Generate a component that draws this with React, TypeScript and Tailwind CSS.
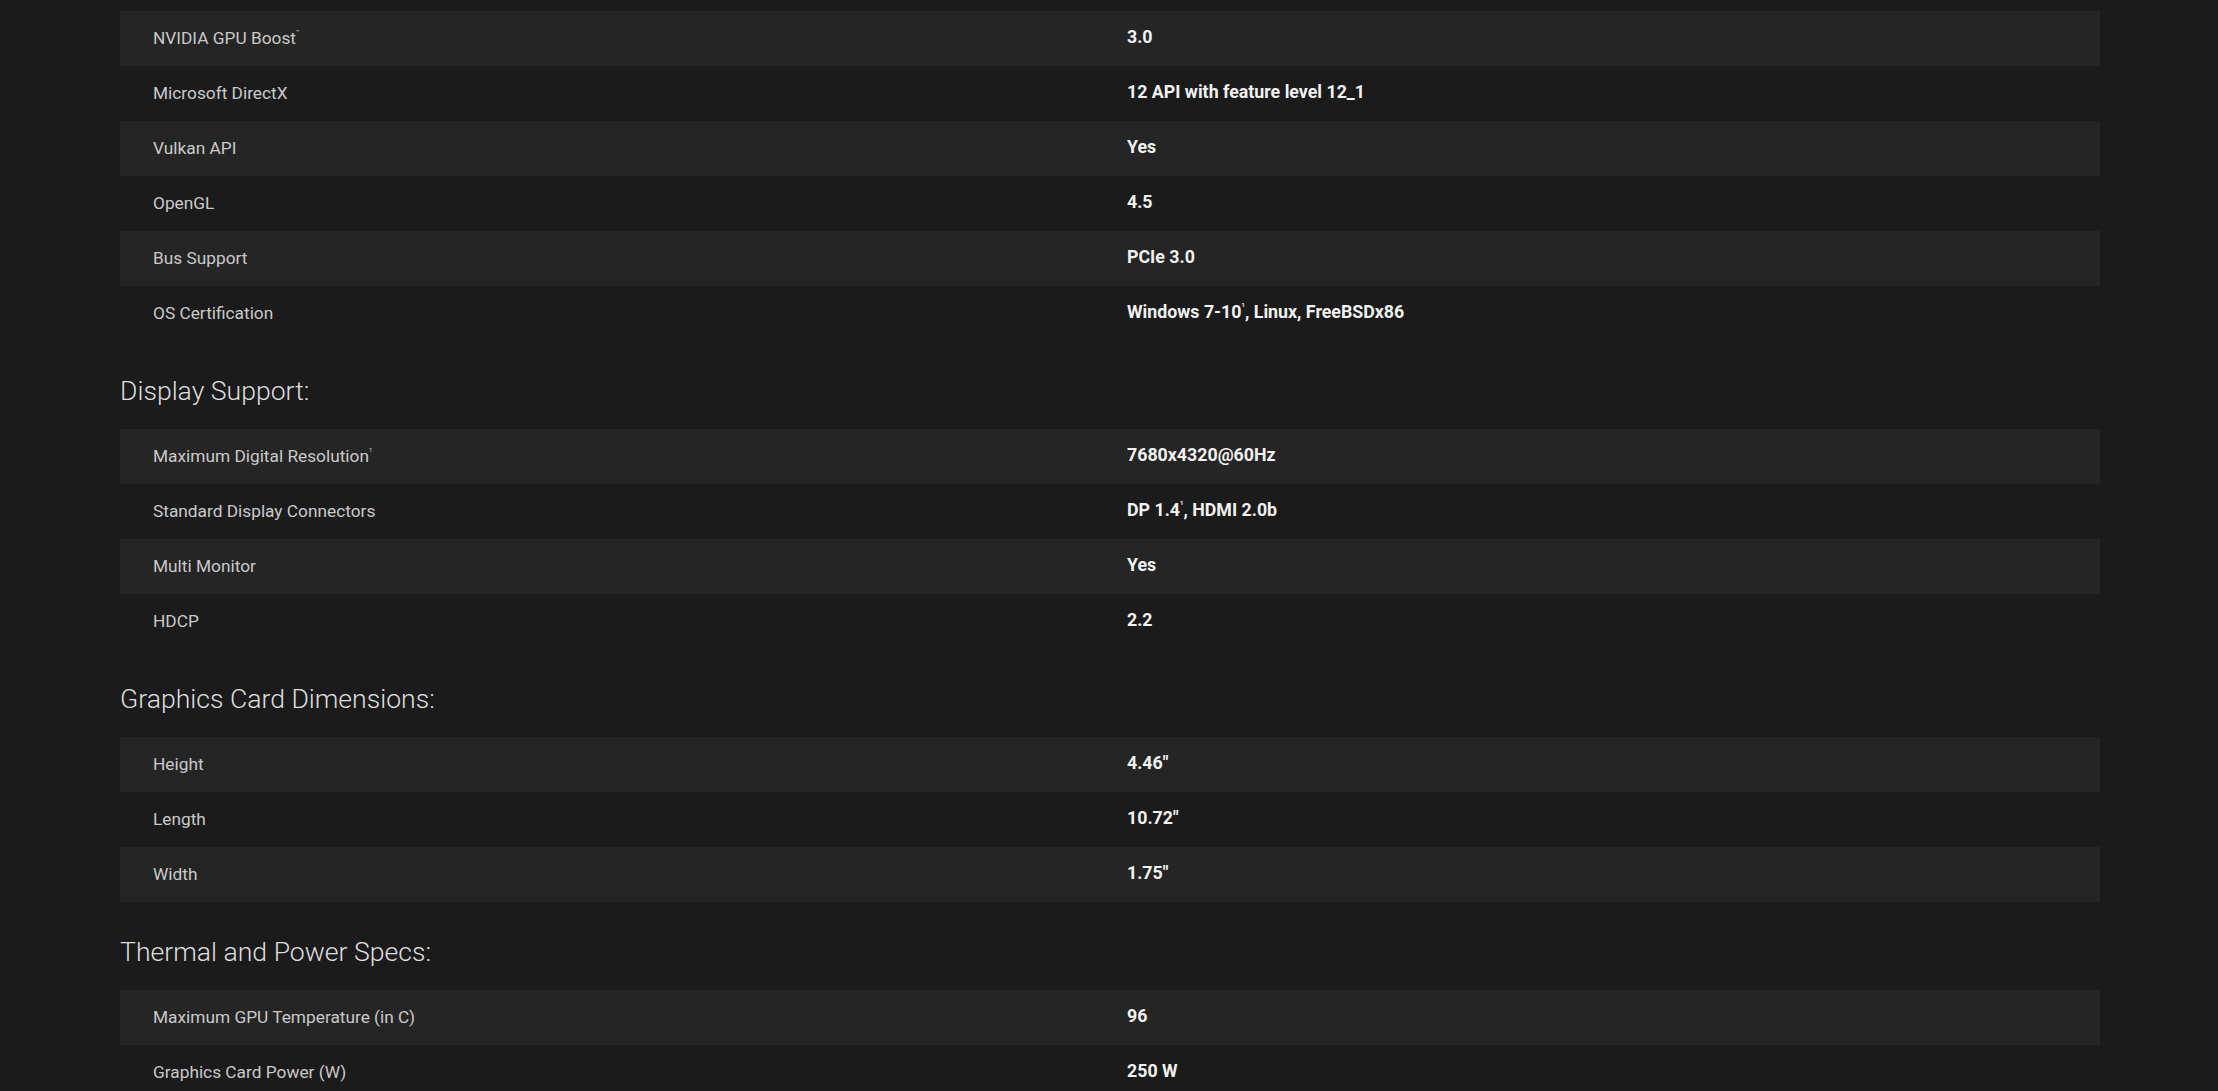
import React from "react";

type Row = { label: React.ReactNode; value: React.ReactNode };

const Sup = ({ children }: { children: React.ReactNode }) => (
  <sup className="text-[6px] align-top relative top-[3px] leading-none">{children}</sup>
);

const sections: { title?: string; rows: Row[] }[] = [
  {
    rows: [
      { label: <>NVIDIA GPU Boost<Sup>™</Sup></>, value: "3.0" },
      { label: "Microsoft DirectX", value: "12 API with feature level 12_1" },
      { label: "Vulkan API", value: "Yes" },
      { label: "OpenGL", value: "4.5" },
      { label: "Bus Support", value: "PCIe 3.0" },
      { label: "OS Certification", value: <>Windows 7-10<Sup>1</Sup>, Linux, FreeBSDx86</> },
    ],
  },
  {
    title: "Display Support:",
    rows: [
      { label: <>Maximum Digital Resolution<Sup>1</Sup></>, value: "7680x4320@60Hz" },
      { label: "Standard Display Connectors", value: <>DP 1.4<Sup>1</Sup>, HDMI 2.0b</> },
      { label: "Multi Monitor", value: "Yes" },
      { label: "HDCP", value: "2.2" },
    ],
  },
  {
    title: "Graphics Card Dimensions:",
    rows: [
      { label: "Height", value: "4.46\"" },
      { label: "Length", value: "10.72\"" },
      { label: "Width", value: "1.75\"" },
    ],
  },
  {
    title: "Thermal and Power Specs:",
    rows: [
      { label: "Maximum GPU Temperature (in C)", value: "96" },
      { label: "Graphics Card Power (W)", value: "250 W" },
    ],
  },
];

export default function App() {
  return (
    <div className="min-h-screen bg-[#1b1b1b] font-['Roboto','Liberation_Sans',sans-serif] pt-[11px]">
      <div className="ml-[120px] w-[1980px]">
        {sections.map((s, i) => (
          <div key={i}>
            {s.title && (
              <h3 className="pt-[36px] pb-[24px] text-[26.6px] leading-[28px] font-light text-[#dedede]">
                {s.title}
              </h3>
            )}
            <div>
              {s.rows.map((r, j) => (
                <div
                  key={j}
                  className={`grid grid-cols-2 h-[55px] items-center ${j % 2 === 0 ? "bg-[#252525]" : ""}`}
                >
                  <div className="pl-[33px] text-[17.3px] text-[#c9c9c9]">{r.label}</div>
                  <div className="pl-[17px] pb-[2px] text-[17.8px] font-bold text-[#f2f2f2]">{r.value}</div>
                </div>
              ))}
            </div>
          </div>
        ))}
      </div>
    </div>
  );
}
